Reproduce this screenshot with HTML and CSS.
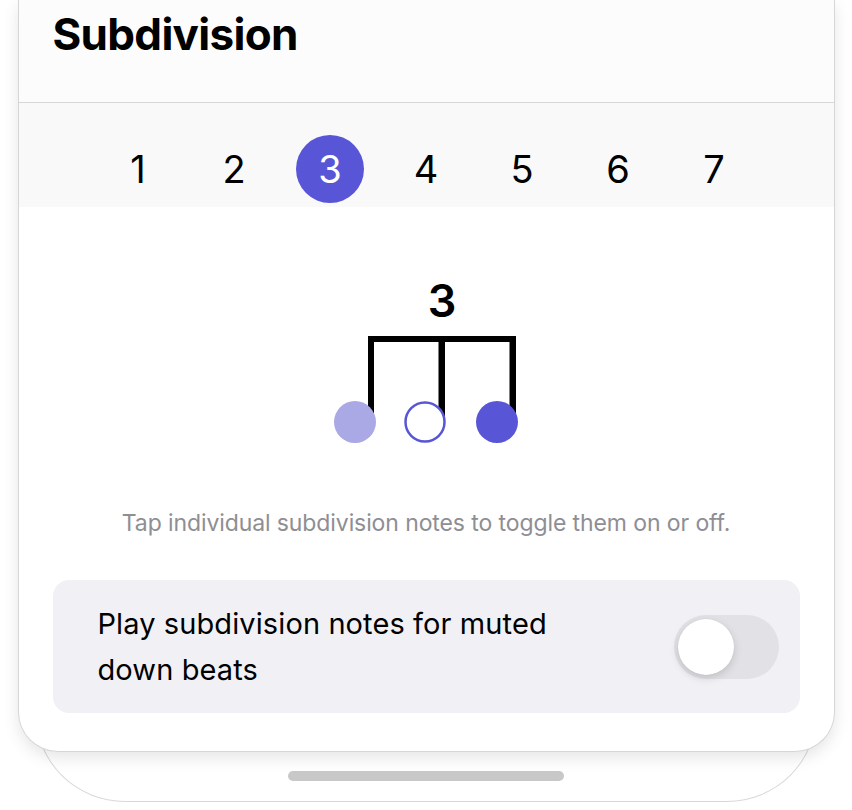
FILE: index.html
```html
<!DOCTYPE html>
<html lang="en">

<head>
    <meta charset="UTF-8">
    <meta name="viewport" content="width=device-width, initial-scale=1.0">
    <title>Subdivision</title>

    <link rel="stylesheet" href="styles.css">
</head>

<body>

    <div class="device">
        <div class="sheet">
            <div class="sheet-header">
                <h1>Subdivision</h1>
            </div>

            <div class="picker">
                <div class="picker-item">1</div>
                <div class="picker-item">2</div>
                <div class="picker-item active">3</div>
                <div class="picker-item">4</div>
                <div class="picker-item">5</div>
                <div class="picker-item">6</div>
                <div class="picker-item">7</div>
            </div>

            <div class="pattern">
                <!-- triplet: beam, three stems and the note heads -->
                <svg class="triplet" width="200" height="180" viewBox="0 0 200 180">
                    <text x="116" y="48" text-anchor="middle" class="tuplet-num">3</text>
                    <rect x="42" y="67" width="148" height="6" fill="#000" />
                    <rect x="42" y="67" width="6" height="86" fill="#000" />
                    <rect x="112.5" y="67" width="6.5" height="86" fill="#000" />
                    <rect x="183.5" y="67" width="6.5" height="86" fill="#000" />
                    <circle cx="29" cy="153" r="21" fill="#aaa8e5" />
                    <circle cx="99" cy="153" r="19.5" fill="#fff" stroke="#5856d6" stroke-width="2.5" />
                    <circle cx="171" cy="153" r="21" fill="#5856d6" />
                </svg>
                <p class="hint">Tap individual subdivision notes to toggle them on or off.</p>
            </div>

            <div class="setting-row">
                <div class="setting-label">Play subdivision notes for muted down beats</div>
                <div class="switch">
                    <div class="switch-knob"></div>
                </div>
            </div>
        </div>

        <div class="home-bar"></div>
    </div>

</body>

</html>
```

FILE: styles.css
```css
body {
    margin: 0;
    background-color: #fff;
    font-family: Inter, "Noto Sans", sans-serif;
    color: #000;
}

.device {
    margin: 0 35px;
    border: 1.5px solid #d9d9d9;
    border-top: none;
    border-radius: 0 0 90px 90px;
    background-color: #fff;
    display: flex;
    flex-direction: column;
    align-items: center;
}

.sheet {
    align-self: stretch;
    margin: 0 -18.5px;
    background-color: #fff;
    border: 1px solid #d6d6d6;
    border-top: none;
    border-radius: 0 0 40px 40px;
    box-shadow: 0 6px 16px rgba(0, 0, 0, 0.1);
    padding-bottom: 38px;
}

.sheet-header {
    height: 103px;
    padding: 9px 34px 0;
    box-sizing: border-box;
    background-color: #fcfcfd;
    border-bottom: 1px solid #d8d8d8;
}

h1 {
    margin: 0;
    font-size: 44px;
    line-height: 50px;
    font-weight: 700;
    letter-spacing: -0.7px;
}

.picker {
    display: flex;
    justify-content: center;
    padding: 32px 0 4px;
    background-color: #f9f9fa;
}

.picker-item {
    width: 96px;
    height: 68px;
    display: flex;
    justify-content: center;
    align-items: center;
    font-size: 38px;
    font-weight: 400;
}

.picker-item.active {
    width: 68px;
    margin: 0 14px;
    border-radius: 50%;
    background-color: #5856d6;
    color: #fff;
}

.pattern {
    display: flex;
    flex-direction: column;
    align-items: center;
    padding-top: 62px;
}

.tuplet-num {
    font-family: Inter, sans-serif;
    font-size: 45px;
    font-weight: 600;
}

.hint {
    margin: 60px 0 0;
    font-size: 23px;
    line-height: 28px;
    letter-spacing: -0.1px;
    color: #8e8e93;
}

.setting-row {
    display: flex;
    justify-content: space-between;
    align-items: center;
    margin: 43px 34px 0;
    padding: 21px 21px 20px 45px;
    background-color: #f1f1f5;
    border-radius: 16px;
}

.setting-label {
    max-width: 500px;
    font-size: 29px;
    line-height: 46px;
    letter-spacing: 0.1px;
}

.switch {
    width: 105px;
    height: 64px;
    padding: 4px;
    box-sizing: border-box;
    border-radius: 32px;
    background-color: #e1e1e6;
}

.switch-knob {
    width: 56px;
    height: 56px;
    border-radius: 50%;
    background-color: #fff;
    box-shadow: 0 3px 8px rgba(0, 0, 0, 0.15), 0 0 1px rgba(0, 0, 0, 0.1);
}

.home-bar {
    width: 276px;
    height: 10px;
    margin: 19px 0 20px;
    border-radius: 5px;
    background-color: #c8c8c8;
}
```
